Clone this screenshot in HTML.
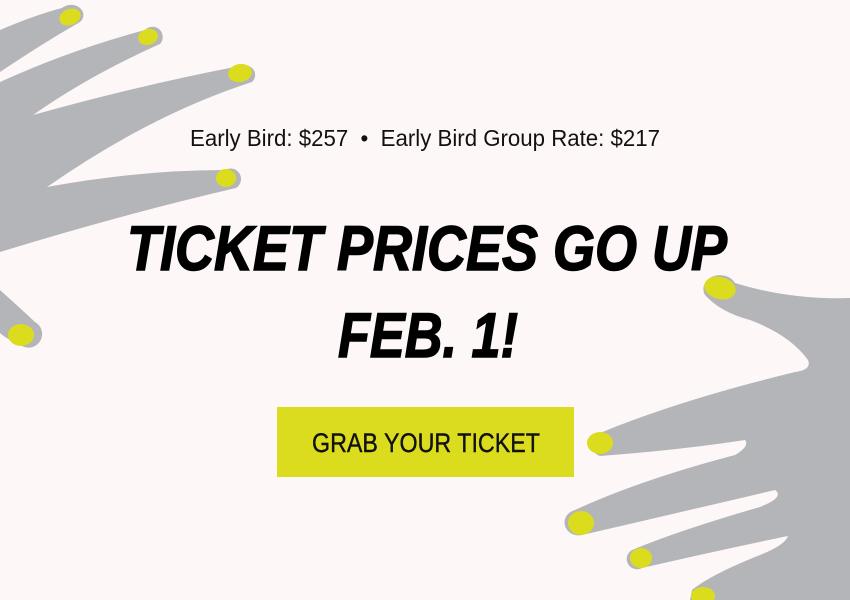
<!DOCTYPE html>
<html><head><meta charset="utf-8"><style>
html,body{margin:0;padding:0;background:#fdf8f7;width:850px;height:600px;overflow:hidden}
</style></head><body>
<svg width="850" height="600" viewBox="0 0 850 600" xmlns="http://www.w3.org/2000/svg">
<rect width="850" height="600" fill="#fdf8f7"/>
<g fill="#b4b5b8">
<path d="M0,30 Q35,15 62,8 A11,9 0 0 1 80,22 Q40,45 0,72 Z"/>
<path d="M0,82 Q70,50 145,30 A9,9 0 0 1 160,44 Q90,75 33,115 Q140,85 245,65 A11,10 0 0 1 252,82 Q150,115 47,187 Q140,170 225,170 A10,10 0 0 1 236,188 Q120,215 0,252 Z"/>
<path d="M0,290 Q20,308 35,322 A11,11 0 0 1 22,346 Q5,338 0,333 Z"/>
<path d="M850,298 Q790,300 735,283 A12,10 0 0 0 705,295 Q720,312 750,320 Q790,335 808,360 Q812,370 795,372 Q680,400 600,433 A12,12 0 0 0 600,456 Q680,450 745,440 Q750,446 735,455 Q640,480 575,510 A13,12 0 0 0 582,535 Q690,510 775,490 Q785,497 760,507 Q680,530 632,550 A10,10 0 0 0 642,568 Q720,550 788,536 Q785,545 760,555 Q710,575 692,590 L690,600 L850,600 Z"/>
</g>
<g fill="#dcdc1f">
<ellipse cx="70" cy="17" rx="11" ry="8" transform="rotate(-20 70 17)"/>
<ellipse cx="148" cy="37" rx="10" ry="8" transform="rotate(-15 148 37)"/>
<ellipse cx="240" cy="73" rx="12" ry="9" transform="rotate(-10 240 73)"/>
<ellipse cx="226" cy="178" rx="10" ry="9"/>
<ellipse cx="21" cy="335" rx="13" ry="11"/>
<ellipse cx="720" cy="288" rx="16" ry="11" transform="rotate(15 720 288)"/>
<ellipse cx="600" cy="443" rx="13" ry="11"/>
<ellipse cx="581" cy="523" rx="13" ry="12"/>
<ellipse cx="641" cy="558" rx="11" ry="10"/>
<ellipse cx="703" cy="596" rx="12" ry="9"/>
</g>
<text x="190" y="146" textLength="470" lengthAdjust="spacingAndGlyphs" font-family="Liberation Sans, sans-serif" font-size="23" fill="#111" xml:space="preserve">Early Bird: $257  •  Early Bird Group Rate: $217</text>
<text x="127" y="270" textLength="600" lengthAdjust="spacingAndGlyphs" font-family="Liberation Sans, sans-serif" font-weight="bold" font-style="italic" font-size="63" fill="#000" stroke="#000" stroke-width="1.5">TICKET PRICES GO UP</text>
<text x="338" y="357" textLength="180" lengthAdjust="spacingAndGlyphs" font-family="Liberation Sans, sans-serif" font-weight="bold" font-style="italic" font-size="63" fill="#000" stroke="#000" stroke-width="1.5">FEB. 1!</text>
<rect x="277" y="407" width="297" height="70" fill="#dcdc1f"/>
<text x="312" y="452" textLength="228" lengthAdjust="spacingAndGlyphs" font-family="Liberation Sans, sans-serif" font-size="27" fill="#111" stroke="#111" stroke-width="0.4">GRAB YOUR TICKET</text>
</svg>
</body></html>
